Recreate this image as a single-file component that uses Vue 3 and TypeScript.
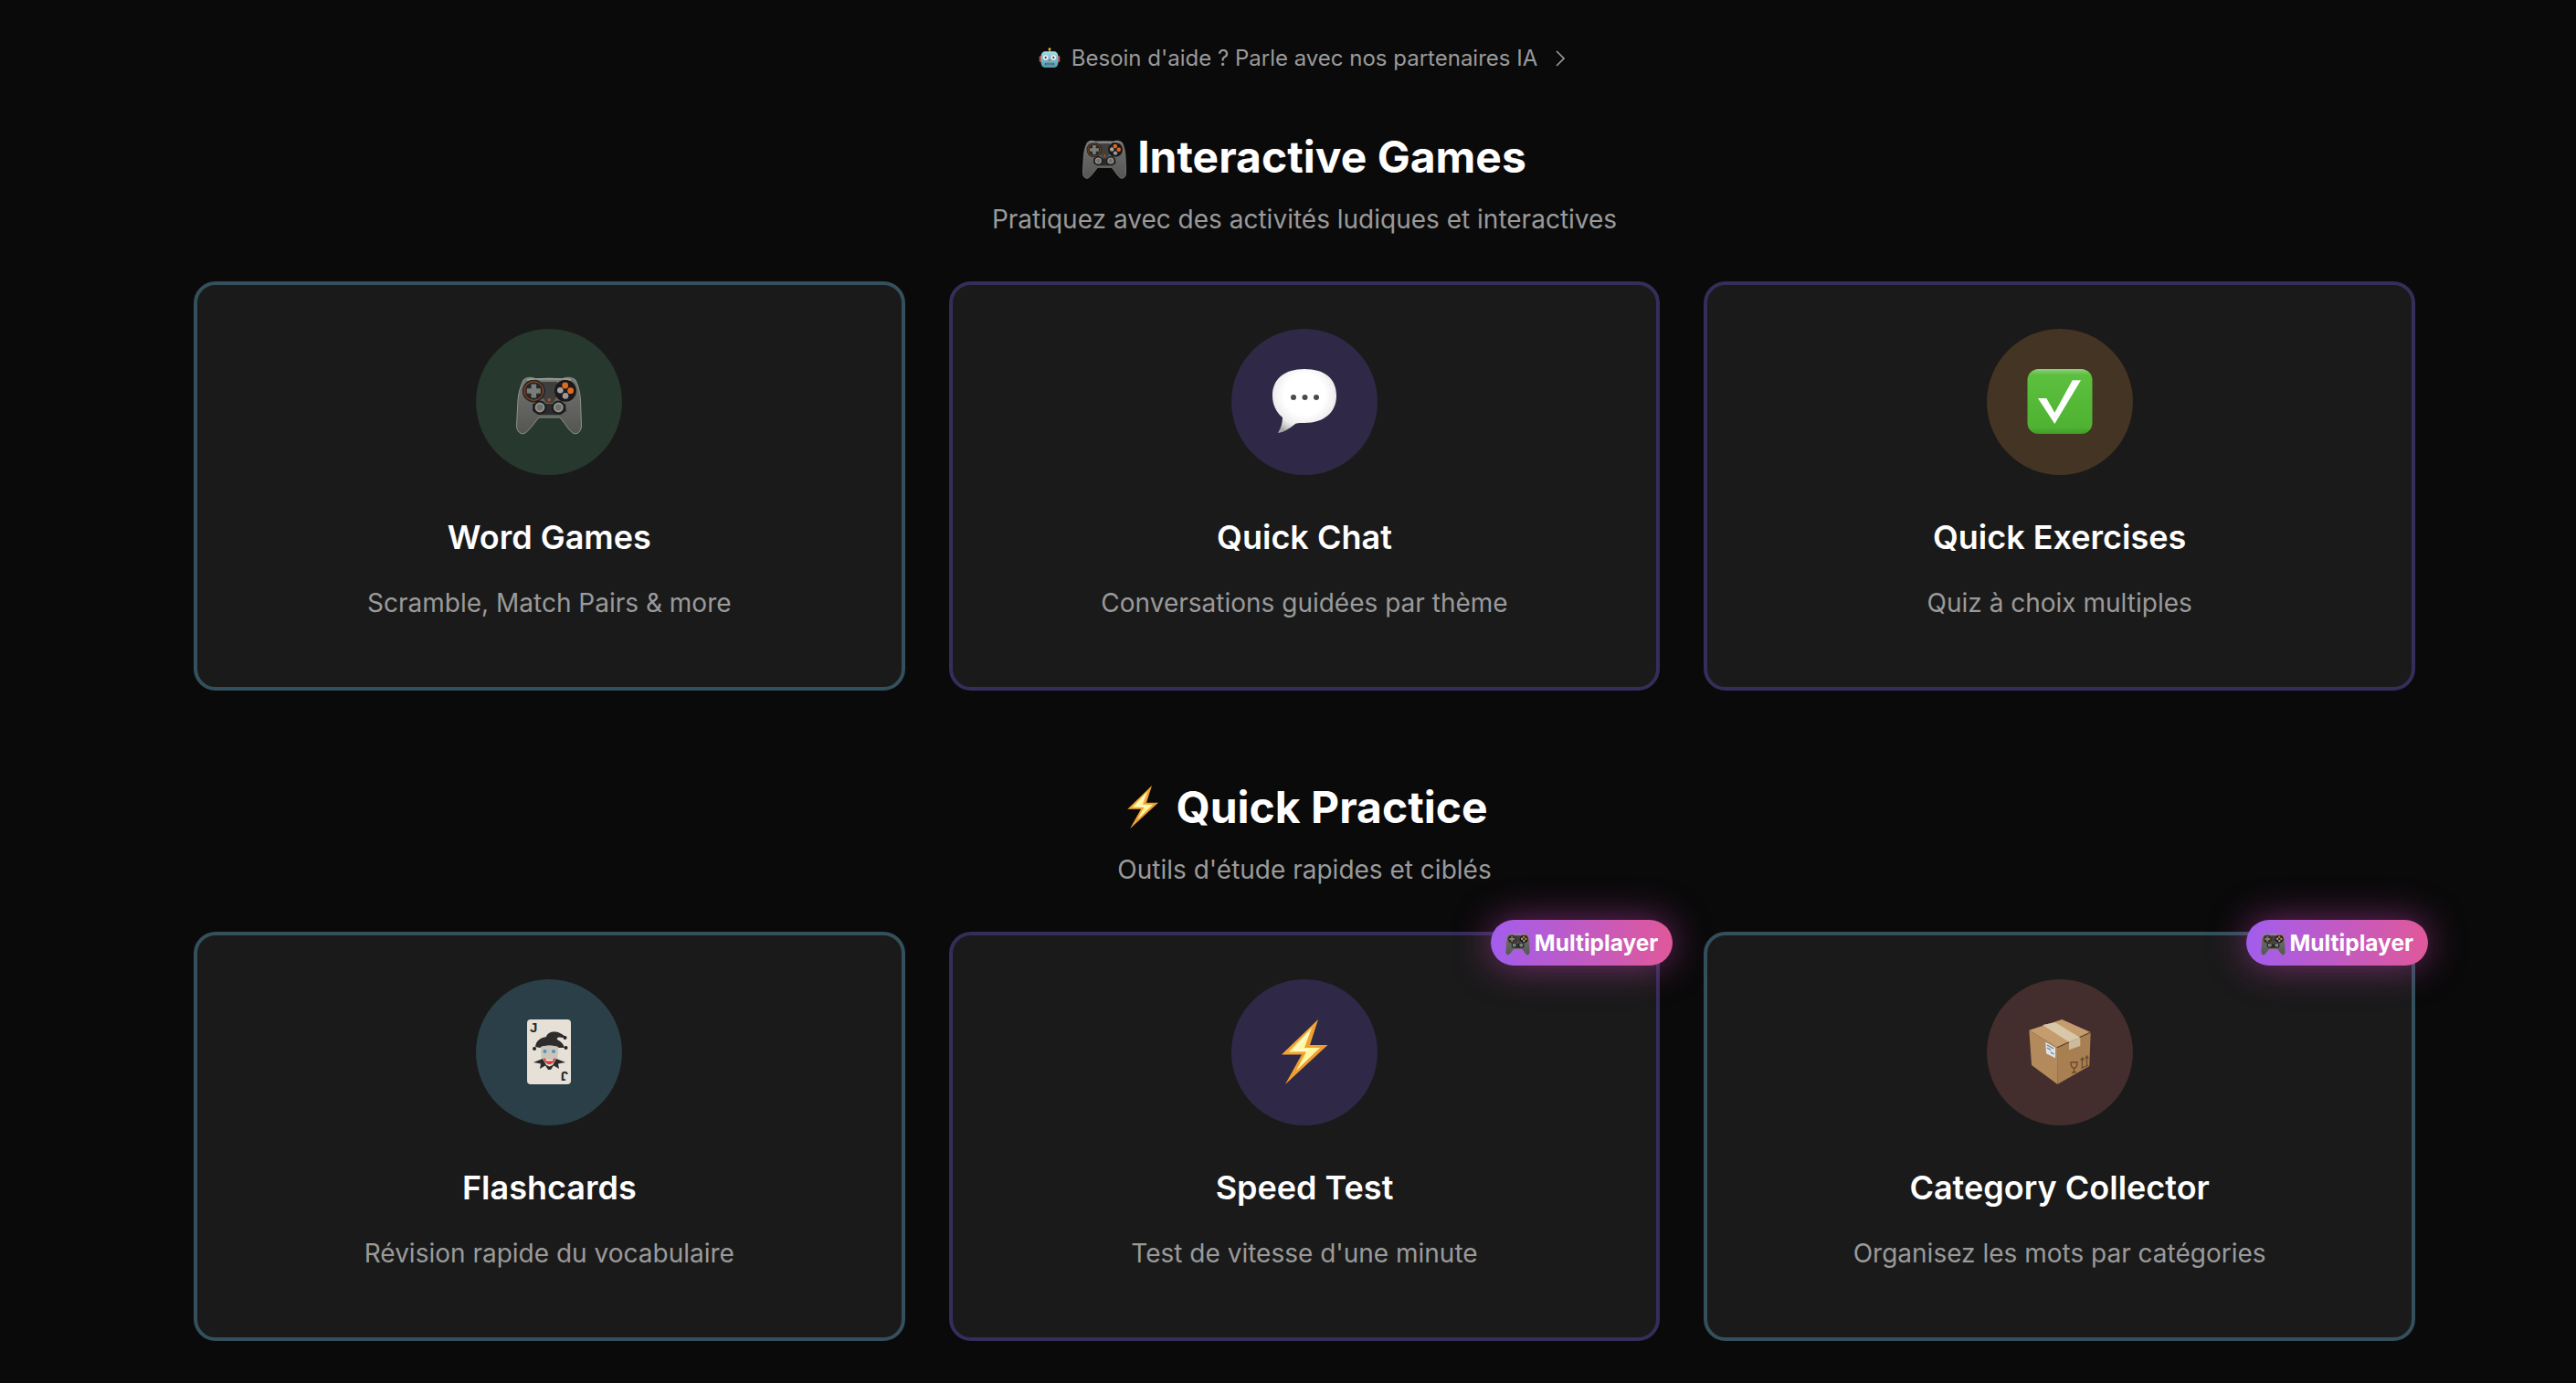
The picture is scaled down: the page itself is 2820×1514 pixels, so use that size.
<script setup lang="ts">
interface Card {
  title: string
  desc: string
  icon: string
  tone: string
  edge: string
  multi?: boolean
}
interface Section {
  icon: string
  title: string
  sub: string
  cards: Card[]
}
const sections: Section[] = [
  {
    icon: 'i-pad',
    title: 'Interactive Games',
    sub: 'Pratiquez avec des activités ludiques et interactives',
    cards: [
      { title: 'Word Games', desc: 'Scramble, Match Pairs & more', icon: 'i-pad', tone: 'green', edge: 'teal' },
      { title: 'Quick Chat', desc: 'Conversations guidées par thème', icon: 'i-chat', tone: 'violet', edge: 'purple' },
      { title: 'Quick Exercises', desc: 'Quiz à choix multiples', icon: 'i-check', tone: 'brown', edge: 'purple' }
    ]
  },
  {
    icon: 'i-bolt',
    title: 'Quick Practice',
    sub: "Outils d'étude rapides et ciblés",
    cards: [
      { title: 'Flashcards', desc: 'Révision rapide du vocabulaire', icon: 'i-joker', tone: 'slate', edge: 'teal' },
      { title: 'Speed Test', desc: "Test de vitesse d'une minute", icon: 'i-bolt', tone: 'violet', edge: 'purple', multi: true },
      { title: 'Category Collector', desc: 'Organisez les mots par catégories', icon: 'i-box', tone: 'rust', edge: 'teal', multi: true }
    ]
  }
]
</script>

<template>
  <svg class="defs" width="0" height="0" aria-hidden="true">
    <defs>
      <linearGradient id="g-body" x1="0" y1="0" x2="0" y2="1">
        <stop offset="0" stop-color="#787a76" />
        <stop offset="0.45" stop-color="#656663" />
        <stop offset="1" stop-color="#555653" />
      </linearGradient>
      <radialGradient id="g-bubble" cx="0.5" cy="0.4" r="0.64">
        <stop offset="0.5" stop-color="#ffffff" />
        <stop offset="0.78" stop-color="#ececec" />
        <stop offset="0.95" stop-color="#bdbdbd" />
        <stop offset="1" stop-color="#a6a6a6" />
      </radialGradient>
      <linearGradient id="g-green" x1="0" y1="0" x2="0" y2="1">
        <stop offset="0" stop-color="#8fd07f" />
        <stop offset="0.09" stop-color="#5cc03e" />
        <stop offset="0.9" stop-color="#4fb232" />
        <stop offset="1" stop-color="#3f9c28" />
      </linearGradient>
      <linearGradient id="g-bolt" x1="0" y1="0" x2="1" y2="1">
        <stop offset="0" stop-color="#f8b13a" />
        <stop offset="1" stop-color="#e88f2a" />
      </linearGradient>
      <linearGradient id="g-head" x1="0" y1="0" x2="0" y2="1">
        <stop offset="0" stop-color="#a7dcea" />
        <stop offset="1" stop-color="#4f97ac" />
      </linearGradient>

      <symbol id="i-pad" viewBox="0 0 72 72">
        <path d="M8 12 C12 8 18 9 22 11 L50 11 C54 9 60 8 65 12 C68 18 70 26 70.500 34 L71.500 62 C71.500 68 67 72 63 70.500 C58 68 54 60 48 53 L25 53 C19 60 14 68 9 70.500 C5 72 .5 68 .5 62 L2 34 C2.500 26 5 18 8 12 Z" fill="url(#g-body)" stroke="#8e908c" stroke-width="1" />
        <path d="M28 14 L45 14 L45 30 L40 37 L33 37 L28 30 Z" fill="#3f403e" />
        <path d="M18 38 L54 38 L55 46 L49 50 L24 50 L18 46 Z" fill="#2a2b2a" />
        <circle cx="19.300" cy="24" r="12.500" fill="#262726" />
        <circle cx="19.300" cy="24" r="10.300" fill="none" stroke="#a8541f" stroke-width="1" />
        <path d="M16.500 16.500 h5.600 v4.700 h4.700 v5.600 h-4.700 v4.700 h-5.600 v-4.700 h-4.700 v-5.600 h4.700 Z" fill="#7b7d79" />
        <circle cx="54" cy="23.700" r="12" fill="#1a1a1a" />
        <circle cx="53.700" cy="18" r="3.400" fill="#e4691f" />
        <circle cx="59.600" cy="23.700" r="3.400" fill="#e4691f" />
        <circle cx="48.300" cy="23.300" r="3.300" fill="#a3a3a1" />
        <circle cx="54" cy="29.400" r="3.300" fill="#9a9a98" />
        <circle cx="26" cy="42" r="7.500" fill="#1c1c1c" />
        <circle cx="46.300" cy="42" r="7.500" fill="#1c1c1c" />
        <circle cx="26" cy="42" r="5.400" fill="#93948f" />
        <circle cx="46.300" cy="42" r="5.400" fill="#93948f" />
        <circle cx="26" cy="42" r="3.400" fill="#6f706c" />
        <circle cx="46.300" cy="42" r="3.400" fill="#6f706c" />
        <circle cx="36.300" cy="33.700" r="1.800" fill="#a8541f" />
        <path d="M12 12 C20 10 52 10 60 12" fill="none" stroke="#a0a29e" stroke-width="1.500" />
      </symbol>

      <symbol id="i-chat" viewBox="0 0 72 72">
        <path d="M36 0 C59 0 71 11 71 29 C71 47 58 59 36 59 C32 59 29 58.600 26 60 C20 65 14 69 7 70 C10 65 12 59 12 53 C5 47 1 39 1 29 C1 11 14 0 36 0 Z" fill="url(#g-bubble)" />
        <circle cx="24" cy="31" r="3" fill="#4a4a4a" />
        <circle cx="36.500" cy="31" r="3" fill="#4a4a4a" />
        <circle cx="49" cy="31" r="3" fill="#4a4a4a" />
      </symbol>

      <symbol id="i-check" viewBox="0 0 72 72">
        <rect x="0.500" y="0" width="71" height="71" rx="12" fill="url(#g-green)" />
        <path d="M12 32 L21.300 32 L30.300 47.700 L49.700 12.300 L59 12.300 L30.300 60 Z" fill="#ffffff" />
      </symbol>

      <symbol id="i-joker" viewBox="0 0 72 72">
        <rect x="12" y="0" width="48" height="71" rx="4" fill="#e6e0d6" />
        <text x="15" y="14" class="card-j">J</text>
        <text x="15" y="14" class="card-j" transform="rotate(180 36 35.500)">J</text>
        <path d="M21 30 C22 22 28 20 33 19 C34 14 42 12 48 15 C50 16 52 17 54 19 L50 20 C46 19 44 20 45 22 C49 24 52 27 53 31 L47 31 C40 28 32 28 26 31 Z" fill="#2c2c2c" />
        <circle cx="53.500" cy="20" r="2" fill="#222" />
        <circle cx="20" cy="32" r="2" fill="#222" />
        <circle cx="54.500" cy="31" r="2" fill="#222" />
        <path d="M27 30 C32 28 41 28 46 30 L45.500 41 C44 47 40 50 36.500 50 C33 50 29 47 27.500 41 Z" fill="#c9c6be" />
        <circle cx="31.500" cy="35" r="2" fill="#5c93a8" />
        <circle cx="41" cy="35" r="2" fill="#5c93a8" />
        <path d="M30 42 C33 44 40 44 43 42 C42 48 38 49 36.500 49 C35 49 31 48 30 42 Z" fill="#d8392e" />
        <path d="M32 43.500 L41 43.500 L40 45.500 L33 45.500 Z" fill="#f2eee6" />
        <path d="M19 47 L29 43 L33 50 L36.500 51.500 L40 50 L44 43 L54 47 L46 48.500 L47 54 L41 50.500 L38 55 L35 55 L32 50.500 L26 54 L27 48.500 Z" fill="#2a2a2a" />
      </symbol>

      <symbol id="i-bolt" viewBox="0 0 72 72">
        <path d="M51 0 L11 38.500 L33 38.500 L15 71 L61.500 28 L42 28 Z" fill="url(#g-bolt)" />
        <path d="M44 9 L19 35.500 L38 35.500 L27 56 L53 31 L36 31 Z" fill="#fff6a0" />
        <path d="M41 15 L26 33 L40 33.500" fill="none" stroke="#ffffff" stroke-width="1.500" opacity=".7" />
      </symbol>

      <symbol id="i-box" viewBox="0 0 72 72">
        <path d="M2.300 11.700 L38.300 0 L69.700 14 L33 30.700 Z" fill="#c49c6d" />
        <path d="M2.300 11.700 L33 30.700 L33.300 71 L5 50 Z" fill="#b38a5c" />
        <path d="M33 30.700 L69.700 14 L68.300 51 L33.300 71 Z" fill="#a87f50" />
        <path d="M33 30.700 L69.700 14" stroke="#5b4128" stroke-width="1.200" />
        <path d="M17 6 L31 3.300 L58.300 20 L46 24.700 Z" fill="#d8c7a9" />
        <path d="M46 24.700 L58.300 20 L58.300 29 L46 33.300 Z" fill="#cdbb9d" />
        <path d="M20.300 24.700 L31 30.700 L31 42.300 L21 37.300 Z" fill="#dfe3e6" />
        <path d="M22 28 L29 32 M22 31 L26 33.500 M26 36 L29.500 38" stroke="#6d7c8a" stroke-width="1.300" />
        <path d="M47.700 47 L55 46.700 C55 51 54 53 51.500 53.500 L51.500 58 M49 58.500 L54 57.500 M47.700 47 C48 51 49 53 51.500 53.500" fill="none" stroke="#6b4c2e" stroke-width="1.400" />
        <path d="M60.500 53 L60.500 43 M58.800 45 L60.500 42 L62.300 44.500 M65.500 50.500 L65.500 41 M63.800 43 L65.500 40 L67.200 42.500 M59 53.500 L67 50" fill="none" stroke="#6b4c2e" stroke-width="1.300" />
      </symbol>

      <symbol id="i-robot" viewBox="0 0 72 72">
        <circle cx="36" cy="5" r="4.500" fill="#e9b32f" />
        <rect x="33.500" y="7" width="5" height="8" fill="#c98a2c" />
        <rect x="2" y="28" width="9" height="20" rx="3" fill="#c5483f" />
        <rect x="61" y="28" width="9" height="20" rx="3" fill="#c5483f" />
        <rect x="8" y="13" width="56" height="53" rx="14" fill="url(#g-head)" />
        <circle cx="23" cy="33" r="8" fill="#f3f7f7" />
        <circle cx="49" cy="33" r="8" fill="#f3f7f7" />
        <circle cx="23" cy="33" r="3.500" fill="#31464f" />
        <circle cx="49" cy="33" r="3.500" fill="#31464f" />
        <path d="M36 36 L40 44 L32 44 Z" fill="#d24a3e" />
        <rect x="21" y="50" width="30" height="8" rx="2" fill="#315a68" />
        <path d="M27 50 v8 M33 50 v8 M39 50 v8 M45 50 v8" stroke="#cfe3e8" stroke-width="1.500" />
      </symbol>
    </defs>
  </svg>

  <main class="page">
    <a class="promo">
      <svg class="ico-promo" aria-hidden="true"><use href="#i-robot" /></svg>
      <span>Besoin d'aide ? Parle avec nos partenaires IA</span>
      <svg class="chev" viewBox="0 0 10 18" aria-hidden="true"><path d="M1 1 L9 9 L1 17" /></svg>
    </a>

    <section v-for="s in sections" :key="s.title" class="section">
      <h2 class="heading">
        <svg class="ico-head" aria-hidden="true"><use :href="'#' + s.icon" /></svg>
        <span>{{ s.title }}</span>
      </h2>
      <p class="sub">{{ s.sub }}</p>
      <div class="grid">
        <article v-for="c in s.cards" :key="c.title" class="card" :class="c.edge">
          <span v-if="c.multi" class="badge">
            <svg class="ico-badge" aria-hidden="true"><use href="#i-pad" /></svg>
            <span>Multiplayer</span>
          </span>
          <div class="disc" :class="c.tone">
            <svg class="ico-card" aria-hidden="true"><use :href="'#' + c.icon" /></svg>
          </div>
          <h3 class="name">{{ c.title }}</h3>
          <p class="desc">{{ c.desc }}</p>
        </article>
      </div>
    </section>
  </main>
</template>

<style scoped>
.defs {
  position: absolute;
}
.card-j {
  font-family: "Liberation Sans", sans-serif;
  font-size: 15px;
  font-weight: 700;
  fill: #2a2a2a;
}
.page {
  box-sizing: border-box;
  width: 2432px;
  margin-left: 212px;
  padding-top: 44px;
  display: flex;
  flex-direction: column;
  align-items: center;
  font-family: Inter, "Noto Sans", sans-serif;
}
.promo {
  display: flex;
  align-items: center;
  height: 40px;
  margin-bottom: 58px;
  padding-right: 6px;
  color: #9a9a9a;
  font-size: 24px;
  line-height: 40px;
}
.ico-promo {
  width: 24px;
  height: 24px;
  margin-right: 12px;
}
.chev {
  width: 10px;
  height: 18px;
  margin-left: 20px;
}
.chev path {
  fill: none;
  stroke: #9a9a9a;
  stroke-width: 1.6;
}
.section {
  width: 100%;
  margin-bottom: 98px;
  display: flex;
  flex-direction: column;
  align-items: center;
}
.heading {
  margin: 0 0 14px;
  display: flex;
  align-items: center;
  gap: 12px;
  color: #ffffff;
  font-size: 48px;
  line-height: 60px;
  font-weight: 700;
}
.ico-head {
  width: 48px;
  height: 48px;
}
.sub {
  margin: 0 0 44px;
  color: #9a9a9a;
  font-size: 28px;
  line-height: 48px;
}
.grid {
  width: 100%;
  display: grid;
  grid-template-columns: repeat(3, 1fr);
  gap: 48px;
}
.card {
  box-sizing: border-box;
  position: relative;
  height: 448px;
  padding-top: 48px;
  display: flex;
  flex-direction: column;
  align-items: center;
  background: #1a1a1a;
  border: 4px solid;
  border-radius: 24px;
}
.card.teal {
  border-color: #33505c;
}
.card.purple {
  border-color: #352d5a;
}
.disc {
  width: 160px;
  height: 160px;
  border-radius: 50%;
  display: flex;
  align-items: center;
  justify-content: center;
}
.disc.green { background: #27382e; }
.disc.violet { background: #2f2947; }
.disc.brown { background: #443424; }
.disc.slate { background: #2a3f48; }
.disc.rust { background: #432d2d; }
.ico-card {
  width: 72px;
  height: 72px;
}
.name {
  margin: 40px 0 20px;
  color: #ffffff;
  font-size: 36px;
  line-height: 56px;
  font-weight: 600;
}
.desc {
  margin: 0;
  color: #9a9a9a;
  font-size: 28px;
  line-height: 48px;
}
.badge {
  position: absolute;
  top: -17px;
  right: -18px;
  z-index: 2;
  height: 50px;
  padding: 0 16px;
  display: flex;
  align-items: center;
  gap: 5px;
  border-radius: 25px;
  background: linear-gradient(90deg, #a25ded, #e0589a);
  box-shadow: 0 0 40px rgba(217, 70, 200, 0.5);
  color: #ffffff;
  font-size: 24.5px;
  font-weight: 700;
}
.ico-badge {
  width: 27px;
  height: 27px;
}
</style>

<style>
html,
body {
  margin: 0;
  background: #0a0a0a;
  overflow: hidden;
}
</style>
